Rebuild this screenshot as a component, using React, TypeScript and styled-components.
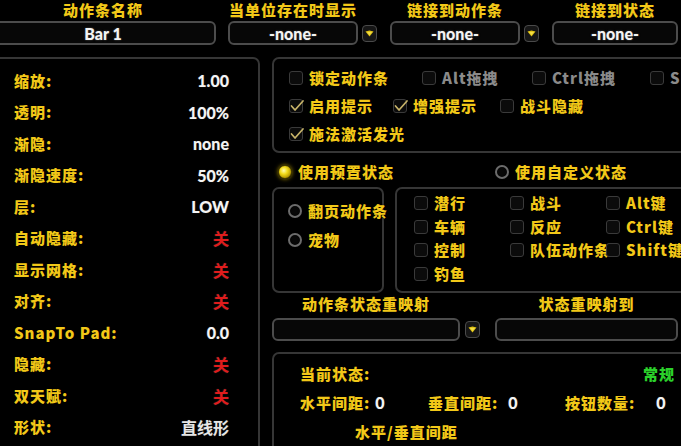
import React from "react";
import styled, { createGlobalStyle } from "styled-components";

const YELLOW = "#f2c818";
const CJK = `"Noto Sans CJK SC", "Noto Sans", sans-serif`;
const NUM = `Lato, "Noto Sans CJK SC", sans-serif`;

const GlobalStyle = createGlobalStyle`
  html, body { margin: 0; padding: 0; background: #000; }
  body { width: 681px; height: 446px; overflow: hidden; }
`;

const Frame = styled.div`
  width: 681px;
  height: 446px;
  overflow: hidden;
  background: #000;
`;

const Canvas = styled.div`
  margin-left: -10px;
  width: 712px;
  display: flex;
  flex-direction: column;
`;

const Header = styled.div`
  display: flex;
  align-items: flex-start;
`;

const Group = styled.div<{ $w: number; $ml: number }>`
  display: grid;
  grid-template-columns: ${(p) => p.$w}px auto;
  column-gap: 4px;
  row-gap: 1px;
  margin-left: ${(p) => p.$ml}px;
`;

const Label = styled.div<{ $color?: string }>`
  font-family: ${CJK};
  font-weight: 900;
  font-size: 15px;
  letter-spacing: 1px;
  line-height: 20px;
  color: ${(p) => p.$color || YELLOW};
  text-shadow: 0 0 2px #000, 1px 1px 1px #000;
  white-space: nowrap;
`;

const HeadLabel = styled(Label)`
  grid-column: 1;
  grid-row: 1;
  text-align: center;
`;

const Field = styled.div<{ $h?: number }>`
  grid-row: 2;
  grid-column: 1;
  box-sizing: border-box;
  height: ${(p) => p.$h || 24}px;
  border: 2px solid #4c4c4c;
  border-radius: 6px;
  background: #070707;
  display: flex;
  align-items: center;
  justify-content: center;
  font-family: ${NUM};
  font-weight: 900;
  font-size: 16px;
  color: #f4f4f4;
  text-shadow: 0 0 2px #555;
`;

const DropBtn = styled.div`
  grid-row: 2;
  grid-column: 2;
  align-self: center;
  box-sizing: border-box;
  width: 15px;
  height: 17px;
  border: 1px solid #4a4a4a;
  border-radius: 4px;
  background: #161616;
  display: flex;
  align-items: center;
  justify-content: center;
`;

const Body = styled.div`
  display: flex;
  gap: 12px;
  margin-top: 12px;
  align-items: flex-start;
`;

const Panel = styled.div`
  box-sizing: border-box;
  border: 2px solid #363636;
  border-radius: 7px;
  background: #000;
`;

const LeftPanel = styled(Panel)`
  width: 270px;
  height: 400px;
  padding: 6px 29px 0 22px;
  display: flex;
  flex-direction: column;
`;

const StatRow = styled.div`
  height: 31.5px;
  display: flex;
  align-items: center;
  justify-content: space-between;
`;

const Value = styled.span<{ $color?: string; $cjk?: boolean }>`
  font-family: ${(p) => (p.$cjk ? CJK : NUM)};
  font-weight: ${(p) => (p.$cjk ? 700 : 900)};
  font-size: 16px;
  color: ${(p) => p.$color || "#f4f4f4"};
  text-shadow: 0 0 2px #000, 0 0 1px #666;
  white-space: nowrap;
`;

const RightCol = styled.div`
  width: 430px;
  display: flex;
  flex-direction: column;
`;

const OptionsBox = styled(Panel)`
  height: 96px;
  padding: 5px 0 0 15px;
  display: flex;
  flex-direction: column;
  overflow: hidden;
`;

const OptRow = styled.div`
  height: 28px;
  display: flex;
  align-items: center;
`;

const Opt = styled.div<{ $w?: number }>`
  display: flex;
  align-items: center;
  gap: 6px;
  flex: none;
  width: ${(p) => (p.$w ? `${p.$w}px` : "auto")};
`;

const Box = styled.div`
  box-sizing: border-box;
  width: 14px;
  height: 14px;
  border: 1px solid #3a3a3a;
  border-radius: 3px;
  background: #0b0b0b;
  flex: none;
  position: relative;
`;

const CheckMark = styled.svg`
  position: absolute;
  left: -1px;
  top: -2px;
`;

const Radio = styled.div<{ $on?: boolean }>`
  box-sizing: border-box;
  width: 14px;
  height: 14px;
  border-radius: 50%;
  flex: none;
  border: ${(p) => (p.$on ? "1px solid #4a4000" : "2px solid #6c6c6c")};
  background: ${(p) =>
    p.$on
      ? "radial-gradient(circle at 40% 38%, #fffcb0 0%, #f3dc1a 35%, #b89a00 70%, #4a3c00 100%)"
      : "#080808"};
  box-shadow: ${(p) => (p.$on ? "0 0 4px #a08800" : "inset 0 0 2px #000")};
`;

const RadioRow = styled.div`
  height: 30px;
  padding: 4px 0 0 6px;
  display: flex;
  align-items: center;
`;

const SubRow = styled.div`
  display: flex;
  gap: 11px;
  height: 106px;
`;

const PageBox = styled(Panel)`
  width: 112px;
  padding: 7px 0 0 14px;
  display: flex;
  flex-direction: column;
  overflow: visible;
`;

const RadioItem = styled.div`
  height: 29px;
  display: flex;
  align-items: center;
  gap: 6px;
`;

const StateBox = styled(Panel)`
  flex: 1;
  padding: 2px 0 0 17px;
  display: grid;
  grid-template-columns: 96px 96px auto;
  grid-auto-rows: 23.7px;
  align-items: center;
`;

const RemapGrid = styled.div`
  display: grid;
  grid-template-columns: 188px 15px 5px 183px;
  column-gap: 5px;
  row-gap: 3px;
`;

const RemapLabel = styled(Label)<{ $col: number }>`
  grid-row: 1;
  grid-column: ${(p) => p.$col};
  height: 22px;
  line-height: 22px;
  text-align: center;
`;

const RemapField = styled(Field)<{ $col: number }>`
  grid-column: ${(p) => p.$col};
  height: 23px;
`;

const StatusBox = styled(Panel)`
  margin-top: 11px;
  height: 120px;
  padding: 5px 25px 0 26px;
  display: flex;
  flex-direction: column;
`;

const StatusRow = styled.div`
  height: 29px;
  display: flex;
  align-items: center;
  justify-content: space-between;
`;

const SpacingRow = styled.div`
  height: 29px;
  display: grid;
  grid-template-columns: 128px 137px auto;
  align-items: center;
`;

const Stat = styled.div<{ $gap: number }>`
  display: flex;
  align-items: center;
  gap: ${(p) => p.$gap}px;
`;

const SubTitle = styled(Label)`
  height: 29px;
  line-height: 29px;
  padding-left: 55px;
`;

function DropIcon() {
  return (
    <svg width="9" height="7" viewBox="0 0 9 7">
      <path d="M0.5 1.5 L4.5 0.5 L8.5 1.5 L4.5 6.5 Z" fill="#e2c414" />
      <path d="M2 2 L7 2 L4.5 5 Z" fill="#fff06a" opacity="0.6" />
    </svg>
  );
}

function Check({ on }: { on?: boolean }) {
  return (
    <Box>
      {on && (
        <CheckMark width="16" height="16" viewBox="0 0 16 16">
          <polyline
            points="2.5,8 6,12 14,3"
            fill="none"
            stroke="#c8b46a"
            strokeWidth="1.7"
            strokeLinecap="round"
            strokeLinejoin="round"
          />
        </CheckMark>
      )}
    </Box>
  );
}

const stats: { label: string; value: string; color?: string; cjk?: boolean }[] = [
  { label: "缩放:", value: "1.00" },
  { label: "透明:", value: "100%" },
  { label: "渐隐:", value: "none" },
  { label: "渐隐速度:", value: "50%" },
  { label: "层:", value: "LOW" },
  { label: "自动隐藏:", value: "关", color: "#e01c1c", cjk: true },
  { label: "显示网格:", value: "关", color: "#e01c1c", cjk: true },
  { label: "对齐:", value: "关", color: "#e01c1c", cjk: true },
  { label: "SnapTo Pad:", value: "0.0" },
  { label: "隐藏:", value: "关", color: "#e01c1c", cjk: true },
  { label: "双天赋:", value: "关", color: "#e01c1c", cjk: true },
  { label: "形状:", value: "直线形", color: "#e6e6e6", cjk: true },
];

const states = [
  "潜行", "战斗", "Alt键",
  "车辆", "反应", "Ctrl键",
  "控制", "队伍动作条", "Shift键",
  "钓鱼",
];

const GRAY = "#8a8a8a";

export default function App() {
  return (
    <Frame>
      <GlobalStyle />
      <Canvas>
        <Header>
          <Group $w={226} $ml={0}>
            <HeadLabel>动作条名称</HeadLabel>
            <Field>Bar 1</Field>
          </Group>
          <Group $w={130} $ml={8}>
            <HeadLabel>当单位存在时显示</HeadLabel>
            <Field>-none-</Field>
            <DropBtn><DropIcon /></DropBtn>
          </Group>
          <Group $w={130} $ml={13}>
            <HeadLabel>链接到动作条</HeadLabel>
            <Field>-none-</Field>
            <DropBtn><DropIcon /></DropBtn>
          </Group>
          <Group $w={126} $ml={13}>
            <HeadLabel>链接到状态</HeadLabel>
            <Field>-none-</Field>
          </Group>
        </Header>

        <Body>
          <LeftPanel>
            {stats.map((s) => (
              <StatRow key={s.label}>
                <Label>{s.label}</Label>
                <Value $color={s.color} $cjk={s.cjk}>{s.value}</Value>
              </StatRow>
            ))}
          </LeftPanel>

          <RightCol>
            <OptionsBox>
              <OptRow>
                <Opt $w={133}><Check /><Label>锁定动作条</Label></Opt>
                <Opt $w={110}><Check /><Label $color={GRAY}>Alt拖拽</Label></Opt>
                <Opt $w={118}><Check /><Label $color={GRAY}>Ctrl拖拽</Label></Opt>
                <Opt><Check /><Label $color={GRAY}>Shift拖拽</Label></Opt>
              </OptRow>
              <OptRow>
                <Opt $w={104}><Check on /><Label>启用提示</Label></Opt>
                <Opt $w={107}><Check on /><Label>增强提示</Label></Opt>
                <Opt><Check /><Label>战斗隐藏</Label></Opt>
              </OptRow>
              <OptRow>
                <Opt><Check on /><Label>施法激活发光</Label></Opt>
              </OptRow>
            </OptionsBox>

            <RadioRow>
              <Opt $w={217}><Radio $on /><Label>使用预置状态</Label></Opt>
              <Opt><Radio /><Label>使用自定义状态</Label></Opt>
            </RadioRow>

            <SubRow>
              <PageBox>
                <RadioItem><Radio /><Label>翻页动作条</Label></RadioItem>
                <RadioItem><Radio /><Label>宠物</Label></RadioItem>
              </PageBox>
              <StateBox>
                {states.map((s) => (
                  <Opt key={s}><Check /><Label>{s}</Label></Opt>
                ))}
              </StateBox>
            </SubRow>

            <RemapGrid>
              <RemapLabel $col={1}>动作条状态重映射</RemapLabel>
              <RemapLabel $col={4}>状态重映射到</RemapLabel>
              <RemapField $col={1} />
              <DropBtn><DropIcon /></DropBtn>
              <RemapField $col={4} />
            </RemapGrid>

            <StatusBox>
              <StatusRow>
                <Label>当前状态:</Label>
                <Label $color="#2bd12b">常规</Label>
              </StatusRow>
              <SpacingRow>
                <Stat $gap={5}><Label>水平间距:</Label><Value>0</Value></Stat>
                <Stat $gap={10}><Label>垂直间距:</Label><Value>0</Value></Stat>
                <Stat $gap={21}><Label>按钮数量:</Label><Value>0</Value></Stat>
              </SpacingRow>
              <SubTitle>水平/垂直间距</SubTitle>
            </StatusBox>
          </RightCol>
        </Body>
      </Canvas>
    </Frame>
  );
}
